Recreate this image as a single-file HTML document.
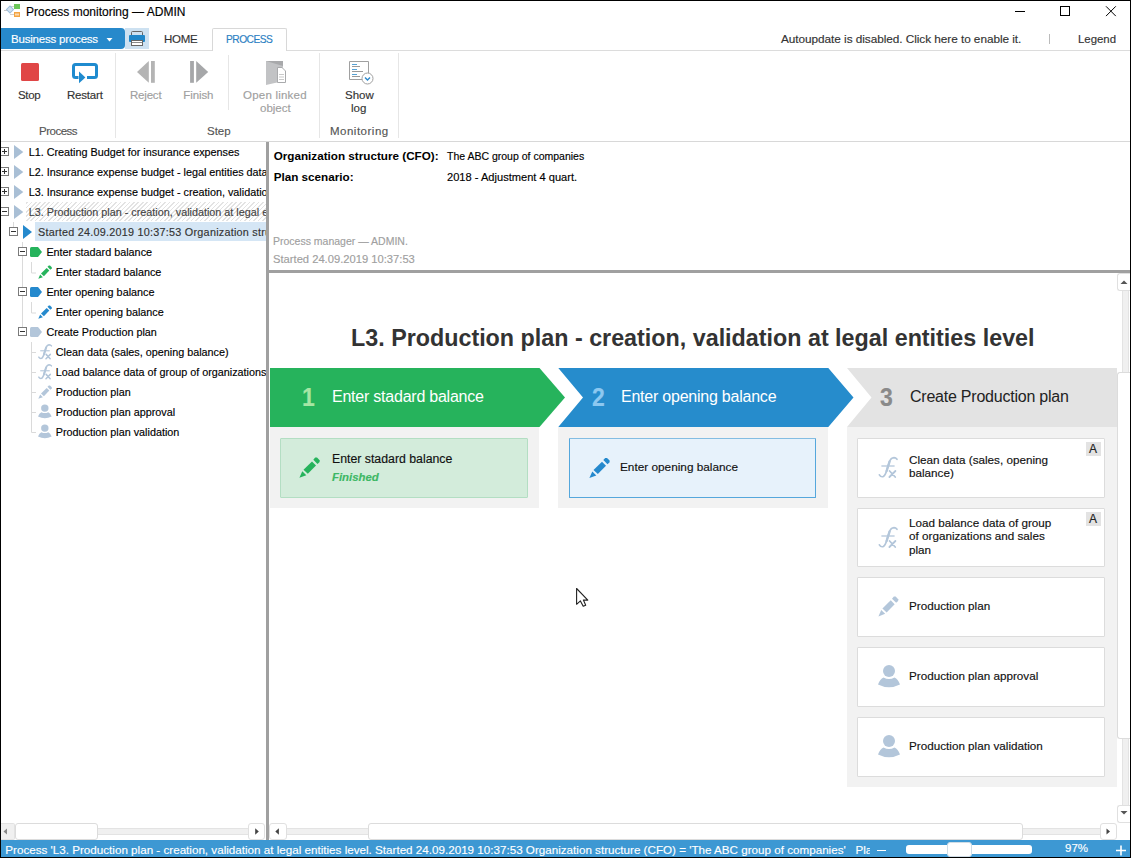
<!DOCTYPE html>
<html><head><meta charset="utf-8">
<style>
*{margin:0;padding:0;box-sizing:border-box}
html,body{width:1131px;height:858px;overflow:hidden;background:#fff}
body{position:relative;font-family:"Liberation Sans",sans-serif;color:#000}
.a{position:absolute}
.t{position:absolute;white-space:nowrap;line-height:1;-webkit-text-stroke:0.15px currentColor}
svg{position:absolute;overflow:visible}
</style></head><body>
<!-- window border -->
<div class="a" style="left:0;top:0;width:1131px;height:858px;border:1px solid #000;z-index:50;pointer-events:none"></div>

<!-- TITLE BAR -->
<svg style="left:0;top:0" width="30" height="25">
  <path d="M4 10.5 H9" stroke="#c8c8c8" stroke-width="1"/>
  <path d="M10 6.5 H14 M10 14.5 H14" stroke="#d0d0d0" stroke-width="1.2"/>
  <rect x="7.5" y="7" width="5" height="5" transform="rotate(45 10 9.5)" fill="#cfe0f0" stroke="#9fbfdc" stroke-width="1"/>
  <rect x="14" y="4" width="6" height="5" fill="#6cc75a"/>
  <rect x="14" y="12" width="6" height="5" fill="#f3a443"/>
  <rect x="15" y="13.5" width="4" height="2" fill="#fbd9b0"/>
</svg>
<div class="t" style="left:26px;top:6px;font-size:12px">Process monitoring — ADMIN</div>
<svg style="left:1010px;top:0" width="120" height="25">
  <path d="M5 11.5 H15" stroke="#000" stroke-width="1"/>
  <rect x="50.5" y="6.5" width="9" height="9" fill="none" stroke="#000" stroke-width="1"/>
  <path d="M96 6.3 L105.8 16.1 M105.8 6.3 L96 16.1" stroke="#000" stroke-width="1"/>
</svg>

<!-- RIBBON TABS -->
<div class="a" style="left:1px;top:28px;width:124px;height:21px;background:#2789cb;border-radius:0 4px 4px 0"></div>
<div class="t" style="left:11px;top:34px;font-size:11.5px;color:#fff;letter-spacing:-0.2px">Business process</div>
<svg style="left:0;top:0" width="130" height="50"><path d="M106.5 38 H112.5 L109.5 41.5 Z" fill="#fff"/></svg>
<div class="a" style="left:125px;top:28px;width:24px;height:21px;background:#cde1f1"></div>
<svg style="left:0;top:0" width="150" height="50">
  <rect x="131.5" y="31.5" width="11" height="5" fill="none" stroke="#666" stroke-width="1" rx="1"/>
  <rect x="129" y="35" width="16" height="7" fill="#1f86c9" rx="1"/>
  <rect x="131.5" y="40.5" width="11" height="5" fill="#fff" stroke="#666" stroke-width="1"/>
  <path d="M132 42.5 H142" stroke="#888" stroke-width="1"/>
</svg>
<div class="t" style="left:164px;top:34px;font-size:11.5px;color:#333;letter-spacing:-0.3px">HOME</div>
<div class="a" style="left:0;top:50px;width:1131px;height:1px;background:#dcdcdc"></div>
<div class="a" style="left:212px;top:28px;width:75px;height:23px;border:1px solid #d8d8d8;border-bottom:none;background:#fff;border-radius:2px 2px 0 0"></div>
<div class="t" style="left:226px;top:34px;font-size:11.5px;color:#2b80c3;letter-spacing:-0.6px;transform:scaleX(0.89);transform-origin:0 0">PROCESS</div>
<div class="t" style="left:781px;top:33.7px;font-size:11.8px;color:#333;letter-spacing:-0.05px">Autoupdate is disabled. Click here to enable it.</div>
<div class="a" style="left:1049px;top:34px;width:1px;height:10px;background:#bbb"></div>
<div class="t" style="left:1078px;top:33.7px;font-size:11.4px;color:#333">Legend</div>

<!-- RIBBON BODY -->
<div class="a" style="left:0;top:141px;width:1131px;height:1px;background:#d8d8d8"></div>
<div class="a" style="left:115px;top:53px;width:1px;height:85px;background:#e6e6e6"></div>
<div class="a" style="left:228px;top:55px;width:1px;height:55px;background:#e6e6e6"></div>
<div class="a" style="left:319px;top:53px;width:1px;height:85px;background:#e6e6e6"></div>
<div class="a" style="left:398px;top:53px;width:1px;height:85px;background:#e6e6e6"></div>

<svg style="left:0;top:0" width="400" height="140">
  <rect x="21" y="63" width="18" height="18" rx="1.5" fill="#e04646"/>
  <path d="M78.5 77.5 H75.5 Q73.5 77.5 73.5 75.5 V66.5 Q73.5 64.5 75.5 64.5 H94.5 Q96.5 64.5 96.5 66.5 V75.5 Q96.5 77.5 94.5 77.5 H87" fill="none" stroke="#1f8bcf" stroke-width="3"/>
  <path d="M79 71.6 L85.4 77.5 L79 83.3 Z" fill="#1f8bcf"/>
  <path d="M148.8 61 V82.8 L137 72 Z" fill="#b4b4b4"/>
  <rect x="151" y="61" width="3.8" height="21.8" fill="#b4b4b4"/>
  <rect x="190.1" y="61" width="3.8" height="21.8" fill="#a6a7a9"/>
  <path d="M196.2 61 V82.8 L208.2 72 Z" fill="#a6a7a9"/>
  <path d="M266 61 H283 V81 L277 82.5 L266 85 Z" fill="#c2c3c5"/>
  <path d="M266 61 H283 V66 Z" fill="#a8a9ab"/>
  <path d="M277.5 67.5 H282 L285.5 71 V82.5 H277.5 Z" fill="#fff" stroke="#a9aaac" stroke-width="1"/>
  <path d="M279 74.5 H284 M279 77 H284 M279 79.5 H284" stroke="#bbb" stroke-width="0.8"/>
  <path d="M362 79.5 H349.5 V61.5 H368.5 V73" fill="none" stroke="#a0a0a0" stroke-width="1"/>
  <path d="M352 64.5 H357 M352 69.5 H357 M352 74.5 H357" stroke="#56a2d6" stroke-width="1"/>
  <path d="M352 66.5 H360 M352 71.5 H363 M352 76.5 H360" stroke="#999" stroke-width="1"/>
  <circle cx="367.5" cy="78.5" r="5.5" fill="#fff" stroke="#a0a0a0" stroke-width="1"/>
  <path d="M365 77.5 L367.5 80 L370 77.5" fill="none" stroke="#2b88cb" stroke-width="1.4"/>
</svg>
<div class="t" style="left:18px;top:90px;font-size:11.5px;color:#333;letter-spacing:-0.3px">Stop</div>
<div class="t" style="left:67px;top:90px;font-size:11.5px;color:#333;letter-spacing:-0.2px">Restart</div>
<div class="t" style="left:130px;top:90px;font-size:11.5px;color:#a0a0a0;letter-spacing:-0.2px">Reject</div>
<div class="t" style="left:183.3px;top:90px;font-size:11.5px;color:#a0a0a0;letter-spacing:-0.1px">Finish</div>
<div class="t" style="left:243px;top:90px;font-size:11.5px;color:#a0a0a0;letter-spacing:0.22px">Open linked</div>
<div class="t" style="left:260px;top:103px;font-size:11.5px;color:#a0a0a0">object</div>
<div class="t" style="left:345px;top:90px;font-size:11.5px;color:#333">Show</div>
<div class="t" style="left:351px;top:103px;font-size:11.5px;color:#333">log</div>
<div class="t" style="left:39px;top:126px;font-size:11.5px;color:#555;letter-spacing:-0.5px">Process</div>
<div class="t" style="left:207px;top:126px;font-size:11.5px;color:#555">Step</div>
<div class="t" style="left:330px;top:126px;font-size:11.5px;color:#555;letter-spacing:0.5px">Monitoring</div>

<!-- TREE -->
<div class="a" style="left:0;top:0;width:266px;height:823px;overflow:hidden">
<div class="t" style="left:28.7px;top:146.5px;font-size:10.8px;color:#000">L1. Creating Budget for insurance expenses</div>
<div class="t" style="left:28.7px;top:166.5px;font-size:10.8px;color:#000">L2. Insurance expense budget - legal entities data input</div>
<div class="t" style="left:28.7px;top:186.5px;font-size:10.8px;color:#000">L3. Insurance expense budget - creation, validation at legal entities level</div>
<div class="a" style="left:26px;top:202px;width:240px;height:19px;background:repeating-linear-gradient(-45deg,#fff 0,#fff 2px,#e3e3e3 2px,#e3e3e3 3.15px)"></div>
<div class="t" style="left:28.7px;top:206.5px;font-size:10.8px;color:#444">L3. Production plan - creation, validation at legal entities level</div>
<div class="a" style="left:35px;top:222px;width:231px;height:19px;background:#d5e6f5"></div>
<div class="t" style="left:38px;top:226.5px;font-size:10.8px;letter-spacing:0.25px;color:#333">Started 24.09.2019 10:37:53 Organization structure (CFO)</div>
<div class="t" style="left:46.4px;top:246.5px;font-size:10.8px;color:#000">Enter stadard balance</div>
<div class="t" style="left:55.7px;top:266.5px;font-size:10.8px;color:#000">Enter stadard balance</div>
<div class="t" style="left:46.4px;top:286.5px;font-size:10.8px;color:#000">Enter opening balance</div>
<div class="t" style="left:55.7px;top:306.5px;font-size:10.8px;color:#000">Enter opening balance</div>
<div class="t" style="left:46.4px;top:326.5px;font-size:10.8px;color:#000">Create Production plan</div>
<div class="t" style="left:55.7px;top:346.5px;font-size:10.8px;color:#000">Clean data (sales, opening balance)</div>
<div class="t" style="left:55.7px;top:366.5px;font-size:10.8px;color:#000">Load balance data of group of organizations and sales plan</div>
<div class="t" style="left:55.7px;top:386.5px;font-size:10.8px;color:#000">Production plan</div>
<div class="t" style="left:55.7px;top:406.5px;font-size:10.8px;color:#000">Production plan approval</div>
<div class="t" style="left:55.7px;top:426.5px;font-size:10.8px;color:#000">Production plan validation</div>
</div>
<svg style="left:0;top:0" width="266" height="823"><path d="M13.5 222 V227 M22.5 242 V247 M22.5 256 V327 M31.5 262 V273 H36 M31.5 302 V313 H36 M31.5 342 V432.5 M31.5 352.5 H36 M31.5 372.5 H36 M31.5 392.5 H36 M31.5 412.5 H36 M31.5 432.5 H36" stroke="#dadada" stroke-width="1" fill="none"/><rect x="0.5" y="147.5" width="8" height="8" fill="#fff" stroke="#7a7a7a" stroke-width="1"/><path d="M2 151.5 H7" stroke="#333" stroke-width="1"/><path d="M4.5 149 V154" stroke="#333" stroke-width="1"/><path d="M14 145 L23.3 152 L14 159 Z" fill="#a9bfd5"/><rect x="0.5" y="167.5" width="8" height="8" fill="#fff" stroke="#7a7a7a" stroke-width="1"/><path d="M2 171.5 H7" stroke="#333" stroke-width="1"/><path d="M4.5 169 V174" stroke="#333" stroke-width="1"/><path d="M14 165 L23.3 172 L14 179 Z" fill="#a9bfd5"/><rect x="0.5" y="187.5" width="8" height="8" fill="#fff" stroke="#7a7a7a" stroke-width="1"/><path d="M2 191.5 H7" stroke="#333" stroke-width="1"/><path d="M4.5 189 V194" stroke="#333" stroke-width="1"/><path d="M14 185 L23.3 192 L14 199 Z" fill="#a9bfd5"/><rect x="0.5" y="207.5" width="8" height="8" fill="#fff" stroke="#7a7a7a" stroke-width="1"/><path d="M2 211.5 H7" stroke="#333" stroke-width="1"/><path d="M14 205 L23.3 212 L14 219 Z" fill="#a9bfd5"/><rect x="9.5" y="227.5" width="8" height="8" fill="#fff" stroke="#7a7a7a" stroke-width="1"/><path d="M11 231.5 H16" stroke="#333" stroke-width="1"/><path d="M23 225 L32 232 L23 239 Z" fill="#2589cd"/><rect x="18.5" y="247.5" width="8" height="8" fill="#fff" stroke="#7a7a7a" stroke-width="1"/><path d="M20 251.5 H25" stroke="#333" stroke-width="1"/><path d="M31.5 247 H38 L42 252 L38 257 H31.5 Q30 257 30 255.5 V248.5 Q30 247 31.5 247 Z" fill="#26b35c"/><polygon points="38.27,278.87 40.20,274.53 42.87,277.13" fill="#26b35c"/><polygon points="41.00,273.47 46.67,267.93 49.33,270.60 43.87,276.20" fill="#26b35c"/><polygon points="47.53,266.87 48.80,265.40 50.00,265.40 51.73,267.13 51.73,268.33 50.33,269.67" fill="#26b35c"/><rect x="18.5" y="287.5" width="8" height="8" fill="#fff" stroke="#7a7a7a" stroke-width="1"/><path d="M20 291.5 H25" stroke="#333" stroke-width="1"/><path d="M31.5 287 H38 L42 292 L38 297 H31.5 Q30 297 30 295.5 V288.5 Q30 287 31.5 287 Z" fill="#2589cd"/><polygon points="38.27,318.87 40.20,314.53 42.87,317.13" fill="#2589cd"/><polygon points="41.00,313.47 46.67,307.93 49.33,310.60 43.87,316.20" fill="#2589cd"/><polygon points="47.53,306.87 48.80,305.40 50.00,305.40 51.73,307.13 51.73,308.33 50.33,309.67" fill="#2589cd"/><rect x="18.5" y="327.5" width="8" height="8" fill="#fff" stroke="#7a7a7a" stroke-width="1"/><path d="M20 331.5 H25" stroke="#333" stroke-width="1"/><path d="M31.5 327 H38 L42 332 L38 337 H31.5 Q30 337 30 335.5 V328.5 Q30 327 31.5 327 Z" fill="#b3c6da"/><path d="M38.79 357.12 Q39.80 358.92 41.52 358.41 Q43.04 357.69 44.26 353.30 L45.92 347.90 Q47.00 344.88 49.30 344.73 Q50.60 344.73 51.46 345.96" fill="none" stroke="#b3c6da" stroke-width="1.44" stroke-linecap="round"/><path d="M43.97 354.38 L46.13 347.54" fill="none" stroke="#b3c6da" stroke-width="2.04" stroke-linecap="round"/><path d="M40.23 350.78 H49.73" stroke="#b3c6da" stroke-width="1.10" fill="none"/><path d="M46.13 354.38 L50.16 358.70 M50.31 354.38 L45.99 358.70" stroke="#b3c6da" stroke-width="1.53" fill="none" stroke-linecap="round"/><path d="M38.79 377.12 Q39.80 378.92 41.52 378.41 Q43.04 377.69 44.26 373.30 L45.92 367.90 Q47.00 364.88 49.30 364.73 Q50.60 364.73 51.46 365.96" fill="none" stroke="#b3c6da" stroke-width="1.44" stroke-linecap="round"/><path d="M43.97 374.38 L46.13 367.54" fill="none" stroke="#b3c6da" stroke-width="2.04" stroke-linecap="round"/><path d="M40.23 370.78 H49.73" stroke="#b3c6da" stroke-width="1.10" fill="none"/><path d="M46.13 374.38 L50.16 378.70 M50.31 374.38 L45.99 378.70" stroke="#b3c6da" stroke-width="1.53" fill="none" stroke-linecap="round"/><polygon points="38.27,398.87 40.20,394.53 42.87,397.13" fill="#b3c6da"/><polygon points="41.00,393.47 46.67,387.93 49.33,390.60 43.87,396.20" fill="#b3c6da"/><polygon points="47.53,386.87 48.80,385.40 50.00,385.40 51.73,387.13 51.73,388.33 50.33,389.67" fill="#b3c6da"/><circle cx="44.82" cy="408.12" r="3.72" fill="#b3c6da"/><path d="M41.41 412.15 Q44.82 414.01 48.23 412.15 Q50.40 413.08 51.64 416.49 Q44.82 419.90 38.00 416.49 Q39.24 413.08 41.41 412.15 Z" fill="#b3c6da"/><circle cx="44.82" cy="428.12" r="3.72" fill="#b3c6da"/><path d="M41.41 432.15 Q44.82 434.01 48.23 432.15 Q50.40 433.08 51.64 436.49 Q44.82 439.90 38.00 436.49 Q39.24 433.08 41.41 432.15 Z" fill="#b3c6da"/></svg>

<!-- SPLITTERS -->
<div class="a" style="left:266px;top:142px;width:3px;height:698px;background:#a0a0a0"></div>
<div class="a" style="left:269px;top:270px;width:862px;height:3px;background:#a0a0a0"></div>

<!-- INFO PANEL -->
<div class="t" style="left:273.7px;top:150px;font-size:11.7px;font-weight:bold;-webkit-text-stroke:0">Organization structure (CFO):</div>
<div class="t" style="left:447px;top:151px;font-size:10.5px">The ABC group of companies</div>
<div class="t" style="left:273.7px;top:171px;font-size:11.7px;font-weight:bold;-webkit-text-stroke:0">Plan scenario:</div>
<div class="t" style="left:447px;top:171.5px;font-size:11.1px">2018 - Adjustment 4 quart.</div>
<div class="t" style="left:273px;top:236px;font-size:10.5px;color:#a0a0a0">Process manager — ADMIN.</div>
<div class="t" style="left:273px;top:253.5px;font-size:11.2px;color:#a0a0a0">Started 24.09.2019 10:37:53</div>

<!-- DIAGRAM -->
<div class="t" style="left:351px;top:327px;font-size:23.3px;font-weight:bold;color:#333;-webkit-text-stroke:0">L3. Production plan - creation, validation at legal entities level</div>

<!-- columns bg -->
<div class="a" style="left:270px;top:427px;width:269px;height:81px;background:#f2f2f2"></div>
<div class="a" style="left:558px;top:427px;width:270px;height:81px;background:#f2f2f2"></div>
<div class="a" style="left:847px;top:427px;width:270px;height:360px;background:#f2f2f2"></div>
<svg style="left:0;top:0" width="1131" height="500">
  <path d="M270 368 H539.5 L565 397.5 L539.5 427 H270 Z" fill="#26b35c"/>
  <path d="M558.3 368 H828.3 L853.5 397.5 L828.3 427 H558.3 L583 397.5 Z" fill="#268ccc"/>
  <path d="M847 368 H1117 V427 H847 L871.5 397.5 Z" fill="#e3e3e3"/>
</svg>
<div class="t" style="left:302px;top:385px;font-size:25px;font-weight:bold;color:#a6e6a4;transform:scaleX(0.92);transform-origin:0 0">1</div>
<div class="t" style="left:332px;top:389px;font-size:16px;letter-spacing:-0.23px;-webkit-text-stroke:0;color:#fff">Enter stadard balance</div>
<div class="t" style="left:592px;top:385px;font-size:25px;font-weight:bold;color:#8cc8f0;transform:scaleX(0.92);transform-origin:0 0">2</div>
<div class="t" style="left:621px;top:389px;font-size:16px;letter-spacing:-0.23px;-webkit-text-stroke:0;color:#fff">Enter opening balance</div>
<div class="t" style="left:880px;top:385px;font-size:25px;font-weight:bold;color:#8a8a8a;transform:scaleX(0.92);transform-origin:0 0">3</div>
<div class="t" style="left:910px;top:389px;font-size:16px;letter-spacing:-0.23px;-webkit-text-stroke:0;color:#222">Create Production plan</div>

<!-- cards -->
<div class="a" style="left:280px;top:438px;width:248px;height:60px;background:#d3ecdb;border:1px solid #b3dec3;border-radius:1px"></div>
<div class="t" style="left:332px;top:453px;font-size:12.3px;color:#111">Enter stadard balance</div>
<div class="t" style="left:332px;top:472px;font-size:11.4px;font-weight:bold;font-style:italic;color:#3db865">Finished</div>
<div class="a" style="left:569px;top:438px;width:247px;height:60px;background:#e7f2fb;border:1px solid #55a7dc;border-top-color:#84bde2;border-radius:1px"></div>
<div class="t" style="left:620px;top:461.5px;font-size:11.8px;color:#111">Enter opening balance</div>

<div class="a" style="left:857px;top:438px;width:248px;height:60px;background:#fff;border:1px solid #dcdcdc;border-radius:1px"></div>
<div class="a" style="left:857px;top:508px;width:248px;height:59px;background:#fff;border:1px solid #dcdcdc;border-radius:1px"></div>
<div class="a" style="left:857px;top:577px;width:248px;height:60px;background:#fff;border:1px solid #dcdcdc;border-radius:1px"></div>
<div class="a" style="left:857px;top:647px;width:248px;height:60px;background:#fff;border:1px solid #dcdcdc;border-radius:1px"></div>
<div class="a" style="left:857px;top:717px;width:248px;height:60px;background:#fff;border:1px solid #dcdcdc;border-radius:1px"></div>
<div class="a" style="left:1086px;top:442px;width:15px;height:14px;background:#e3e3e3"></div>
<div class="t" style="left:1089px;top:443px;font-size:12px;color:#222">A</div>
<div class="a" style="left:1086px;top:512px;width:15px;height:14px;background:#e3e3e3"></div>
<div class="t" style="left:1089px;top:513px;font-size:12px;color:#222">A</div>
<div class="t" style="left:909px;top:452.8px;font-size:11.7px;line-height:13.4px;color:#111">Clean data (sales, opening<br>balance)</div>
<div class="t" style="left:909px;top:516px;font-size:11.7px;line-height:13.4px;color:#111">Load balance data of group<br>of organizations and sales<br>plan</div>
<div class="t" style="left:909px;top:600px;font-size:11.7px;color:#111">Production plan</div>
<div class="t" style="left:909px;top:670px;font-size:11.7px;color:#111">Production plan approval</div>
<div class="t" style="left:909px;top:740px;font-size:11.7px;color:#111">Production plan validation</div>

<!-- CARDICONS -->
<svg style="left:0;top:0" width="1131" height="858"><polygon points="299.40,477.80 302.30,471.30 306.30,475.20" fill="#26b35c"/><polygon points="303.50,469.70 312.00,461.40 316.00,465.40 307.80,473.80" fill="#26b35c"/><polygon points="313.30,459.80 315.20,457.60 317.00,457.60 319.60,460.20 319.60,462.00 317.50,464.00" fill="#26b35c"/><polygon points="589.40,478.10 592.30,471.60 596.30,475.50" fill="#2589cd"/><polygon points="593.50,470.00 602.00,461.70 606.00,465.70 597.80,474.10" fill="#2589cd"/><polygon points="603.30,460.10 605.20,457.90 607.00,457.90 609.60,460.50 609.60,462.30 607.50,464.30" fill="#2589cd"/><path d="M879.40 474.80 Q880.80 477.30 883.20 476.60 Q885.30 475.60 887.00 469.50 L889.30 462.00 Q890.80 457.80 894.00 457.60 Q895.80 457.60 897.00 459.30" fill="none" stroke="#b3c6da" stroke-width="1.70" stroke-linecap="round"/><path d="M886.60 471.00 L889.60 461.50" fill="none" stroke="#b3c6da" stroke-width="2.40" stroke-linecap="round"/><path d="M881.40 466.00 H894.60" stroke="#b3c6da" stroke-width="1.30" fill="none"/><path d="M889.60 471.00 L895.20 477.00 M895.40 471.00 L889.40 477.00" stroke="#b3c6da" stroke-width="1.80" fill="none" stroke-linecap="round"/><path d="M879.40 544.80 Q880.80 547.30 883.20 546.60 Q885.30 545.60 887.00 539.50 L889.30 532.00 Q890.80 527.80 894.00 527.60 Q895.80 527.60 897.00 529.30" fill="none" stroke="#b3c6da" stroke-width="1.70" stroke-linecap="round"/><path d="M886.60 541.00 L889.60 531.50" fill="none" stroke="#b3c6da" stroke-width="2.40" stroke-linecap="round"/><path d="M881.40 536.00 H894.60" stroke="#b3c6da" stroke-width="1.30" fill="none"/><path d="M889.60 541.00 L895.20 547.00 M895.40 541.00 L889.40 547.00" stroke="#b3c6da" stroke-width="1.80" fill="none" stroke-linecap="round"/><polygon points="878.39,616.38 881.23,610.01 885.15,613.84" fill="#b3c6da"/><polygon points="882.41,608.45 890.74,600.31 894.66,604.23 886.62,612.46" fill="#b3c6da"/><polygon points="892.01,598.74 893.88,596.59 895.64,596.59 898.19,599.14 898.19,600.90 896.13,602.86" fill="#b3c6da"/><circle cx="889.00" cy="671.00" r="6.00" fill="#b3c6da"/><path d="M883.50 677.50 Q889.00 680.50 894.50 677.50 Q898.00 679.00 900.00 684.50 Q889.00 690.00 878.00 684.50 Q880.00 679.00 883.50 677.50 Z" fill="#b3c6da"/><circle cx="889.00" cy="741.00" r="6.00" fill="#b3c6da"/><path d="M883.50 747.50 Q889.00 750.50 894.50 747.50 Q898.00 749.00 900.00 754.50 Q889.00 760.00 878.00 754.50 Q880.00 749.00 883.50 747.50 Z" fill="#b3c6da"/></svg>
<!-- /CARDICONS -->
<!-- mouse cursor -->
<svg style="left:575px;top:587px" width="16" height="22">
  <path d="M1.6 1.5 V17.3 L5.4 13.9 L8.2 19.3 L10.7 18.2 L8.4 13.1 H12.8 Z" fill="#fff" stroke="#222" stroke-width="1.1" stroke-linejoin="round"/>
</svg>

<!-- SCROLLBARS -->
<div class="a" style="left:1px;top:823px;width:265px;height:17px;background:#fff"></div>
<div class="a" style="left:1px;top:823px;width:14px;height:17px;background:#f0f0f0;border:1px solid #e2e2e2;border-left:none;border-radius:0 2px 2px 0"></div>
<div class="a" style="left:15px;top:828px;width:234px;height:7px;background:#f0f0f0;border-top:1px solid #e3e3e3;border-bottom:1px solid #e3e3e3"></div>
<div class="a" style="left:15px;top:823px;width:83px;height:17px;background:#fff;border:1px solid #dcdcdc;border-radius:3px"></div>
<div class="a" style="left:248px;top:823px;width:17px;height:17px;background:#fff;border:1px solid #e0e0e0;border-radius:3px"></div>

<div class="a" style="left:269px;top:823px;width:848px;height:17px;background:#fff"></div>
<div class="a" style="left:286px;top:828px;width:814px;height:7px;background:#f0f0f0;border-top:1px solid #e3e3e3;border-bottom:1px solid #e3e3e3"></div>
<div class="a" style="left:269px;top:823px;width:18px;height:17px;background:#fff;border:1px solid #e0e0e0;border-radius:3px"></div>
<div class="a" style="left:368px;top:823px;width:655px;height:17px;background:#fff;border:1px solid #dcdcdc;border-radius:3px"></div>
<div class="a" style="left:1100px;top:823px;width:17px;height:17px;background:#fff;border:1px solid #e0e0e0;border-radius:3px"></div>

<div class="a" style="left:1122px;top:290px;width:7px;height:516px;background:#f0f0f0;border-left:1px solid #e3e3e3;border-right:1px solid #e3e3e3"></div>
<div class="a" style="left:1117px;top:273px;width:13px;height:18px;background:#fff;border:1px solid #e0e0e0;border-right:none;border-radius:3px 0 0 3px"></div>
<div class="a" style="left:1117px;top:372px;width:13px;height:367px;background:#fff;border:1px solid #dcdcdc;border-right:none;border-radius:3px 0 0 3px"></div>
<div class="a" style="left:1117px;top:805px;width:13px;height:18px;background:#fff;border:1px solid #e0e0e0;border-right:none;border-radius:3px 0 0 3px"></div>

<svg style="left:0;top:0" width="20" height="858"><path d="M3.5 831.5 L7 828.5 V834.5 Z" fill="#888"/></svg>
<svg style="left:0;top:0" width="270" height="858"><path d="M258.8 831.5 L255.2 828.3 V834.7 Z" fill="#444"/></svg>
<svg style="left:0;top:0" width="1131" height="858"><path d="M275.3 831.5 L278.9 828.3 V834.7 Z" fill="#444"/><path d="M1110 831.5 L1106.5 828.5 V834.5 Z" fill="#444"/>
<path d="M1120.5 284 L1124 280.5 L1127.5 284 Z" fill="#555"/><path d="M1120.5 811 L1124 814.5 L1127.5 811 Z" fill="#555"/></svg>
<!-- STATUS BAR -->
<div class="a" style="left:0;top:840px;width:1131px;height:18px;background:#3d98d3"></div>
<div class="a" style="left:1px;top:840px;width:868.5px;height:17px;overflow:hidden">
<div class="t" style="left:4.3px;top:3.8px;font-size:11.65px;color:#fff">Process 'L3. Production plan - creation, validation at legal entities level. Started 24.09.2019 10:37:53 Organization structure (CFO) = 'The ABC group of companies'&nbsp;&nbsp; Plan scenario</div>
</div>
<div class="a" style="left:877px;top:850px;width:9px;height:1px;background:#fff"></div>
<div class="a" style="left:906px;top:845px;width:126px;height:9px;background:#fff;border-radius:3px"></div>
<div class="a" style="left:947px;top:842px;width:25px;height:15px;background:#fff;border:1px solid #d0dde6;border-radius:3px"></div>
<div class="t" style="left:1065px;top:843px;font-size:11.5px;color:#fff">97%</div>
<svg style="left:0;top:0" width="1131" height="858"><path d="M1116 850.5 H1126 M1121 845.5 V855.5" stroke="#fff" stroke-width="1.6"/></svg>
</body></html>
